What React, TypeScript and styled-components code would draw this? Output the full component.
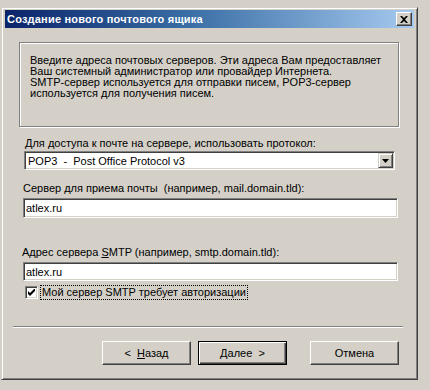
import React from "react";
import styled, { createGlobalStyle } from "styled-components";

const GlobalStyle = createGlobalStyle`
  html, body {
    margin: 0;
    padding: 0;
    background: #d4d0c8;
  }
  body {
    font-family: "Liberation Sans", Arial, sans-serif;
    font-size: 11px;
    color: #000;
  }
`;

const Screen = styled.div`
  width: 430px;
  height: 390px;
  box-sizing: border-box;
  padding: 7px 0 0 1px;
  background: #d4d0c8;
  overflow: hidden;
`;

const Window = styled.div`
  width: 417px;
  height: 373px;
  box-sizing: border-box;
  border: 1px solid;
  border-color: #d4d0c8 #404040 #404040 #d4d0c8;
  box-shadow: inset 1px 1px 0 #fff, inset -1px -1px 0 #808080;
  padding: 2px 3px 3px 3px;
  display: flex;
  flex-direction: column;
`;

const TitleBar = styled.div`
  height: 18px;
  display: flex;
  align-items: center;
  justify-content: space-between;
  padding: 0 2px;
  background: linear-gradient(90deg, #0a246a 0%, #3a6ea5 45%, #a6caf0 100%);
`;

const Title = styled.span`
  color: #fff;
  font-weight: bold;
  font-size: 11px;
  letter-spacing: 0.2px;
`;

const CloseButton = styled.div`
  width: 16px;
  height: 14px;
  box-sizing: border-box;
  background: #d4d0c8;
  border: 1px solid;
  border-color: #fff #404040 #404040 #fff;
  box-shadow: inset -1px -1px 0 #808080;
  display: flex;
  align-items: center;
  justify-content: center;
`;

const Content = styled.div`
  display: flex;
  flex-direction: column;
  align-items: flex-start;
`;

const GroupBox = styled.div`
  margin: 14px 0 0 14px;
  width: 380px;
  height: 85px;
  box-sizing: border-box;
  border: 1px solid #808080;
  box-shadow: 1px 1px 0 #fff, inset 1px 1px 0 #fff;
  padding: 12px 10px 0 10px;
  line-height: 11px;
`;

const Label = styled.div<{ $top: number; $left: number }>`
  margin: ${(p) => p.$top}px 0 0 ${(p) => p.$left}px;
  line-height: 13px;
  white-space: nowrap;
`;

const Field = styled.div<{ $top: number; $left: number; $width: number; $height: number }>`
  margin: ${(p) => p.$top}px 0 0 ${(p) => p.$left}px;
  width: ${(p) => p.$width}px;
  height: ${(p) => p.$height}px;
  box-sizing: border-box;
  background: #fff;
  border: 1px solid;
  border-color: #808080 #fff #fff #808080;
  box-shadow: inset 1px 1px 0 #404040, inset -1px -1px 0 #d4d0c8;
  padding: 0 2px 0 2px;
  display: flex;
  align-items: center;
  justify-content: space-between;
  white-space: nowrap;
`;

const DropButton = styled.div`
  width: 15px;
  height: 15px;
  box-sizing: border-box;
  margin-right: -1px;
  background: #d4d0c8;
  border: 1px solid;
  border-color: #d4d0c8 #404040 #404040 #d4d0c8;
  box-shadow: inset 1px 1px 0 #fff, inset -1px -1px 0 #808080;
  display: flex;
  align-items: center;
  justify-content: center;
`;

const CheckRow = styled.div`
  margin: 4px 0 0 20px;
  height: 15px;
  display: flex;
  align-items: center;
`;

const CheckBox = styled.div`
  width: 13px;
  height: 13px;
  box-sizing: border-box;
  background: #fff;
  border: 1px solid;
  border-color: #808080 #fff #fff #808080;
  box-shadow: inset 1px 1px 0 #404040, inset -1px -1px 0 #d4d0c8;
  display: flex;
  align-items: center;
  justify-content: center;
`;

const CheckLabel = styled.span`
  margin-left: 2px;
  padding: 0 1px;
  line-height: 13px;
  border: 1px dotted #000;
  white-space: nowrap;
`;

const Separator = styled.div`
  margin: 26px 0 0 8px;
  width: 390px;
  height: 1px;
  background: #808080;
  border-bottom: 1px solid #fff;
`;

const ButtonRow = styled.div`
  margin: 13px 0 0 97px;
  display: flex;
`;

const Button = styled.div<{ $gap: number; $default?: boolean }>`
  margin-left: ${(p) => p.$gap}px;
  width: 89px;
  height: 24px;
  box-sizing: border-box;
  background: #d4d0c8;
  display: flex;
  align-items: center;
  justify-content: center;
  border: 1px solid;
  border-color: ${(p) => (p.$default ? "#000" : "#fff #404040 #404040 #fff")};
  box-shadow: ${(p) =>
    p.$default
      ? "inset 1px 1px 0 #fff, inset -1px -1px 0 #404040, inset -2px -2px 0 #808080"
      : "inset -1px -1px 0 #808080"};
  white-space: pre;
`;

const U = styled.span`
  text-decoration: underline;
`;

export default function App() {
  return (
    <Screen>
      <GlobalStyle />
      <Window>
        <TitleBar>
          <Title>Создание нового почтового ящика</Title>
          <CloseButton>
            <svg width="8" height="7" viewBox="0 0 8 7">
              <path d="M0 0h2l2 2 2-2h2L5 3.5 8 7H6L4 5 2 7H0l3-3.5z" fill="#000" />
            </svg>
          </CloseButton>
        </TitleBar>
        <Content>
          <GroupBox>
            Введите адреса почтовых серверов. Эти адреса Вам предоставляет
            <br />
            Ваш системный администратор или провайдер Интернета.
            <br />
            SMTP-сервер используется для отправки писем, POP3-сервер
            <br />
            используется для получения писем.
          </GroupBox>

          <Label $top={10} $left={20}>
            Для доступа к почте на сервере, использовать протокол:
          </Label>
          <Field $top={1} $left={19} $width={371} $height={19}>
            <span style={{ paddingLeft: 1 }}>POP3&nbsp; -&nbsp; Post Office Protocol v3</span>
            <DropButton>
              <svg width="7" height="4" viewBox="0 0 7 4">
                <path d="M0 0h7L3.5 4z" fill="#000" />
              </svg>
            </DropButton>
          </Field>

          <Label $top={12} $left={18}>
            Сервер для приема почты&nbsp; (например, mail.domain.tld):
          </Label>
          <Field $top={3} $left={18} $width={375} $height={20}>
            <span>atlex.ru</span>
          </Field>

          <Label $top={28} $left={17}>
            Адрес сервера <U>S</U>MTP (например, smtp.domain.tld):
          </Label>
          <Field $top={3} $left={18} $width={375} $height={19}>
            <span>atlex.ru</span>
          </Field>

          <CheckRow>
            <CheckBox>
              <svg width="7" height="7" viewBox="0 0 7 7">
                <path d="M0 2v3l2 2 5-5V-1L2 4z" fill="#000" />
              </svg>
            </CheckBox>
            <CheckLabel>Мой сервер SMTP требует авторизации</CheckLabel>
          </CheckRow>

          <Separator />

          <ButtonRow>
            <Button $gap={0}>
              {"<  "}
              <U>Н</U>азад
            </Button>
            <Button $gap={7} $default>
              <U>Д</U>алее{"  >"}
            </Button>
            <Button $gap={23}>Отмена</Button>
          </ButtonRow>
        </Content>
      </Window>
    </Screen>
  );
}
